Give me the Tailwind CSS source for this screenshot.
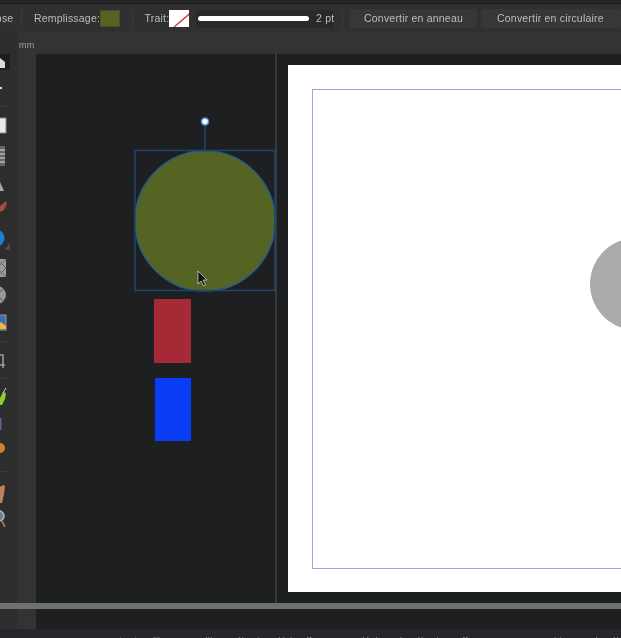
<!DOCTYPE html>
<html lang="fr">
<head>
  <meta charset="UTF-8">
  <title>Affinity Designer</title>
  <script src="https://cdn.jsdelivr.net/npm/@tailwindcss/browser@4"></script>
</head>
<body class="bg-[#1e1f21] overflow-hidden">

<div class="relative w-[621px] h-[638px] overflow-hidden flex flex-col blur-[0.6px] font-['Liberation_Sans',Arial,sans-serif] text-[10.5px] tracking-[0.2px] text-[#bdbdbd]">

  <!-- top edge -->
  <div class="h-[4px] bg-[#262626] border-b border-[#1c1c1c]"></div>

  <!-- context toolbar -->
  <div class="h-[29px] bg-[#303030] flex items-center whitespace-nowrap">
    <div class="w-[21px] overflow-hidden flex justify-end"><span>Ellipse</span></div>
    <div class="w-px h-[18px] bg-[#3b3b3b] ml-[8px]"></div>
    <span class="ml-[12px] w-[68px]">Remplissage:</span>
    <div class="w-[30px] h-[17px] bg-[#566423] border border-[#454f22]"></div>
    <div class="w-px h-[18px] bg-[#3b3b3b] ml-[12px]"></div>
    <span class="ml-[12px] w-[30px]">Trait:</span>
    <div class="w-[31px] h-[17px] bg-white overflow-hidden">
      <svg width="31" height="17" viewBox="0 0 31 17"><line x1="5" y1="17" x2="25" y2="0" stroke="#d8414b" stroke-width="1.5"/></svg>
    </div>
    <div class="ml-[7px] w-[142px] h-[18px] bg-[#292929] rounded-[2px] flex items-center pl-[2px]">
      <div class="w-[111px] h-[5px] rounded-full bg-white"></div>
      <span class="ml-[7px]">2 pt</span>
    </div>
    <div class="w-px h-[18px] bg-[#3b3b3b] ml-[8px]"></div>
    <div class="ml-[7px] w-[127px] h-[19px] shrink-0 bg-[#373737] rounded-[2px] flex items-center justify-center">Convertir en anneau</div>
    <div class="ml-[4px] w-[140px] h-[19px] shrink-0 bg-[#373737] rounded-[2px] flex items-center pl-[16px]">Convertir en circulaire</div>
  </div>

  <!-- horizontal ruler -->
  <div class="h-[21px] bg-[#333333] flex">
    <div class="w-[17px] bg-[#2d2d2d]"></div>
    <div class="w-[19px] text-[9px] text-[#a0a0a0] pt-[6px] pl-[2px]">mm</div>
    <svg id="rulerTop" class="flex-1" width="585" height="21" viewBox="36 33 585 21"></svg>
  </div>

  <!-- main area -->
  <div class="h-[575px] flex">
    <!-- tools, cut off by the window edge -->
    <svg class="w-[17px] h-[575px] bg-[#2d2d2d] shrink-0" viewBox="0 54 17 575">
      <rect x="0" y="48" width="10" height="22" fill="#1d1d1d"/>
      <path d="M0 58l5 4v6H0z" fill="#d8d8d8"/>
      <rect x="0" y="87" width="2" height="2" fill="#ddd"/>
      <rect x="0" y="106" width="10" height="1" fill="#3a3a3a"/>
      <rect x="-2" y="118" width="8" height="15" fill="#e8e8e8" stroke="#888"/>
      <rect x="-2" y="146" width="7" height="20" fill="#666"/>
      <path d="M0 150h5M0 154h5M0 158h5M0 162h5" stroke="#ddd"/>
      <path d="M0 182l4 9H0z" fill="#a8a8a8"/>
      <path d="M0 206l6-5 1 3-3 6-4 2z" fill="#a8493e"/>
      <circle cx="-4" cy="238" r="8.5" fill="#1c7fd6"/>
      <path d="M10 243v7H4z" fill="#4b4b4b"/>
      <rect x="-3" y="259" width="9" height="18" fill="#9a9a9a"/>
      <path d="M-3 259l9 9-9 9M6 259l-9 9 9 9" stroke="#666" fill="none"/>
      <circle cx="-3" cy="295" r="9" fill="#989898"/>
      <path d="M-3 295l6-6M-3 295l6 6" stroke="#555"/>
      <rect x="-3" y="315" width="9" height="15" fill="#3c6fa8" stroke="#999"/>
      <path d="M-3 326l4-4 5 4v3h-9z" fill="#e4bc3a"/>
      <rect x="0" y="341" width="10" height="1" fill="#3a3a3a"/>
      <path d="M0 355h3V368M0 365h5" stroke="#a0a0a0" stroke-width="1.5" fill="none"/>
      <rect x="0" y="378" width="10" height="1" fill="#3a3a3a"/>
      <path d="M0 398l3-6 3 1-1 6-3 6-2 0z" fill="#8ccf2f"/>
      <path d="M3 393l3-5" stroke="#ccc"/>
      <rect x="0" y="418" width="1.5" height="12" fill="#5a5f98"/>
      <circle cx="0" cy="448" r="5" fill="#c98622"/>
      <rect x="0" y="471" width="10" height="1" fill="#3a3a3a"/>
      <path d="M0 487l3-2 2 1-1 8-2 9H0z" fill="#c08259"/>
      <circle cx="-1" cy="516" r="5" fill="#6d7f90" stroke="#b5b5b5" stroke-width="1.5"/>
      <path d="M2 521l3 6" stroke="#c08259" stroke-width="1.5"/>
    </svg>

    <!-- vertical ruler -->
    <svg id="rulerLeft" class="w-[19px] h-[575px] bg-[#333333] shrink-0" viewBox="17 54 19 575"></svg>

    <!-- canvas -->
    <div class="relative flex-1 bg-[#1e1f21] overflow-hidden">
      <div class="absolute left-[239px] top-0 w-[1.5px] h-[549px] bg-[#38393b]"></div>

      <!-- page with margins guide -->
      <div class="absolute left-[252px] top-[11px] w-[340px] h-[527px] bg-white">
        <div class="absolute left-[24px] top-[24px] w-[330px] h-[480px] border-[1.5px] border-[#a79fe2]"></div>
        <div class="absolute left-[302px] top-[173px] w-[92px] h-[92px] rounded-full bg-[#ababab]"></div>
      </div>

      <div class="absolute left-[118px] top-[245px] w-[37px] h-[64px] bg-[#a52a36]"></div>
      <div class="absolute left-[119px] top-[324px] w-[36px] h-[63px] bg-[#0a3df6]"></div>

      <!-- selected ellipse -->
      <svg class="absolute left-0 top-0" width="585" height="549" viewBox="36 54 585 549">
        <circle cx="205" cy="221" r="70" fill="#566423" stroke="#2a5c8a" stroke-width="1.5"/>
        <rect x="135" y="150.500" width="140" height="140" fill="none" stroke="#1f456e" stroke-width="1.5"/>
        <line x1="205" y1="122" x2="205" y2="150" stroke="#1f456e" stroke-width="1.5"/>
        <g id="handles" fill="#2f7bd8" stroke="#a9c8ee" stroke-width="1.500"></g>
        <circle cx="205" cy="121.500" r="3.500" fill="#ffffff" stroke="#4a8fe0" stroke-width="1.500"/>
        <path d="M198 271v13l3-3 2.500 5 2-1-2.500-5h4z" fill="#111" stroke="#ddd" stroke-width="0.700"/>
      </svg>
    </div>
  </div>

  <!-- status bar, mostly below the crop -->
  <div class="h-[9px] bg-[#26272a] overflow-hidden relative">
    <div class="absolute left-[120px] top-[5px] flex items-center gap-[9px] whitespace-nowrap text-[#8f8f8f] text-[9.5px]">
      <svg width="40" height="9" viewBox="0 0 40 9">
        <path d="M0 0l7 6H0zM15 0l6 6h-6z" fill="#777"/>
        <rect x="34" y="0" width="6" height="9" fill="none" stroke="#777"/>
      </svg>
      <div class="w-[7px] h-[7px] rounded-full bg-[#2f9e4f]"></div>
      <span class="ml-[14px]">Ellipse sélectionné(e). <b>Cliquer</b> pour déplacer la sélection. <b>Cliquer</b> sur un autre objet pour le sélectionner.</span>
    </div>
  </div>

  <!-- horizontal scrollbar lies over the rulers and canvas -->
  <div class="absolute left-0 top-[603px] w-full h-[6px] bg-[#6d7172]"></div>
</div>

<script>
  // px per mm read off the ruler labels
  const scale = 2.52;
  const originX = 288;
  const originY = 64.5;
  const tickColor = '#c4c4c4';
  const labelColor = '#8c8c8c';

  let top = '';
  for (let mm = -100; mm <= 140; mm += 2) {
    const x = originX + mm * scale;
    if (mm % 20 === 0) {
      top += `<line x1="${x}" y1="44" x2="${x}" y2="53" stroke="${tickColor}"/>`;
      top += `<text x="${x}" y="44" text-anchor="middle" font-size="9.5" fill="${labelColor}">${mm}</text>`;
    } else {
      const y1 = mm % 10 === 0 ? 49 : 50.5;
      top += `<line x1="${x}" y1="${y1}" x2="${x}" y2="53" stroke="${tickColor}" stroke-opacity="0.8"/>`;
    }
  }
  top += `<line x1="201" y1="33" x2="201" y2="53" stroke="#8f8f8f" stroke-width="1.5"/>`;
  document.getElementById('rulerTop').innerHTML = top;

  let left = '';
  for (let mm = -4; mm <= 224; mm += 2) {
    const y = originY + mm * scale;
    if (mm % 20 === 0) {
      left += `<line x1="29" y1="${y}" x2="36" y2="${y}" stroke="${tickColor}"/>`;
      left += `<text transform="translate(26 ${y}) rotate(-90)" text-anchor="middle" font-size="9.5" fill="${labelColor}">${mm}</text>`;
    } else {
      const x1 = mm % 10 === 0 ? 32 : 33.5;
      left += `<line x1="${x1}" y1="${y}" x2="36" y2="${y}" stroke="${tickColor}" stroke-opacity="0.8"/>`;
    }
  }
  left += `<line x1="17" y1="268" x2="35" y2="268" stroke="#8f8f8f" stroke-width="1.5"/>`;
  document.getElementById('rulerLeft').innerHTML = left;

  // selection handles
  const points = [[135,150.5],[205,150.5],[275,150.5],[135,221],[275,221],[135,290.5],[205,290.5],[275,290.5]];
  document.getElementById('handles').innerHTML = points
    .map(p => `<circle cx="${p[0]}" cy="${p[1]}" r="4"/>`)
    .join('');
</script>

</body>
</html>
